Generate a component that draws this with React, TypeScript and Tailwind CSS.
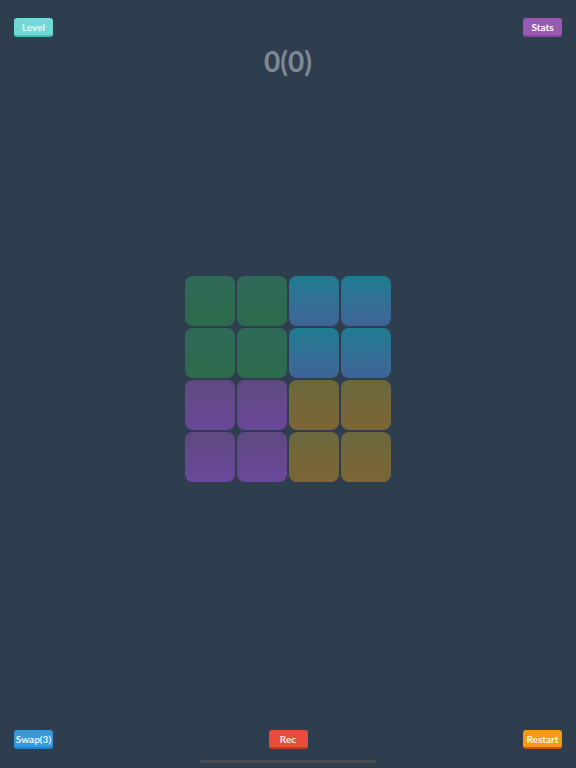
import type { ReactNode } from "react";

type Tile = { from: string; to: string };

const GREEN: Tile = { from: "from-[#2f6a5a]", to: "to-[#2d6b4c]" };
const BLUE: Tile = { from: "from-[#1c7c91]", to: "to-[#3f6497]" };
const PURPLE: Tile = { from: "from-[#5e4a80]", to: "to-[#6b479a]" };
const OLIVE: Tile = { from: "from-[#6a683e]", to: "to-[#7e6535]" };

const BOARD: Tile[][] = [
  [GREEN, GREEN, BLUE, BLUE],
  [GREEN, GREEN, BLUE, BLUE],
  [PURPLE, PURPLE, OLIVE, OLIVE],
  [PURPLE, PURPLE, OLIVE, OLIVE],
];

function Btn({ children, className }: { children: ReactNode; className: string }) {
  return (
    <button
      type="button"
      className={`flex h-[19px] w-[39px] items-center justify-center rounded-[3px] border-b-2 pt-[1px] text-[10px] font-bold leading-none ${className}`}
    >
      {children}
    </button>
  );
}

export default function App() {
  return (
    <div
      className="flex h-[768px] w-[576px] flex-col bg-[#2f3e4e]"
      style={{ fontFamily: "Lato, 'Open Sans', sans-serif" }}
    >
      <div className="flex items-start justify-between px-[14px] pt-[18px]">
        <Btn className="border-[#4fbab4] bg-[#70d8d6] text-[#e6f7f6]">Level</Btn>
        <Btn className="border-[#8446a0] bg-[#9b59b6] text-white">Stats</Btn>
      </div>

      <p className="mt-[7px] text-center text-[28px] font-bold leading-[34px] text-[#7d8996]">0(0)</p>

      <div className="mt-[198px] flex justify-center">
        <div className="grid grid-cols-4 gap-[2px]">
          {BOARD.flat().map((t, i) => (
            <div key={i} className={`h-[50px] w-[50px] rounded-[8px] bg-gradient-to-b ${t.from} ${t.to}`} />
          ))}
        </div>
      </div>

      <div className="flex-1" />

      <div className="flex items-center justify-between px-[14px]">
        <Btn className="border-[#2a80b9] bg-[#3498db] text-[#eaf4fb]">Swap(3)</Btn>
        <Btn className="border-[#c0392b] bg-[#e74c3c] text-[#fbe9e7]">Rec</Btn>
        <Btn className="border-[#d35400] bg-[#f39c12] text-[#fdf2e0]">Restart</Btn>
      </div>

      <div className="mt-[11px] mb-[5px] flex justify-center">
        <div className="h-[3px] w-[176px] rounded-full bg-[#4b4c52]" />
      </div>
    </div>
  );
}
